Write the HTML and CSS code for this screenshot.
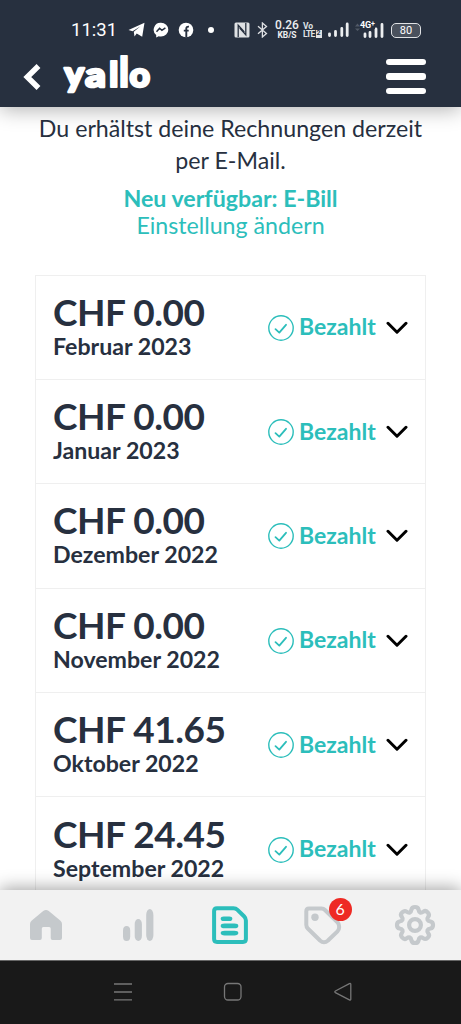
FILE: index.html
```html
<!DOCTYPE html>
<html lang="de">
<head>
<meta charset="utf-8">
<title>yallo – Rechnungen</title>
<link rel="stylesheet" href="styles.css">
</head>
<body>
<div class="phone">
  <header class="top">
    <div class="status">
      <span class="clock">11:31</span>
      <svg class="st-tg" width="17" height="16" viewBox="0 0 17 16"><path d="M0.5 8 16.5 0.8 14.2 14.8 8.7 11.6 6.5 14.5 5.8 9.8 12.5 4.2 4.6 9.2Z" fill="#fff"/></svg>
      <svg class="st-ms" width="16" height="16" viewBox="0 0 16 16"><path d="M8 .8a7.2 6.8 0 0 1 0 13.8q-1.200 0-2.300-.4L3.200 15.400V13A6.900 6.900 0 0 1 8 .8Z" fill="#fff"/><path d="M3.500 9.700 6.600 6.300 8.900 8.400 12.400 5.900" fill="none" stroke="#27303f" stroke-width="1.500"/></svg>
      <svg class="st-fb" width="16" height="16" viewBox="0 0 16 16"><circle cx="8" cy="8" r="7.300" fill="#fff"/><path d="M8.300 15.500V6.600Q8.300 4.400 10.900 4.700M5.800 8.600H10.700" fill="none" stroke="#27303f" stroke-width="1.900"/></svg>
      <i class="dot"></i>
      <svg class="st-nfc" width="16" height="16" viewBox="0 0 16 16"><rect x=".5" y=".5" width="15" height="15" rx="1.500" fill="#dfe1e4"/><path d="M4.200 15V3.200L10.300 10M11.800 1V12.800L5.700 6" fill="none" stroke="#27303f" stroke-width="1.300"/></svg>
      <svg class="st-bt" width="11" height="16" viewBox="0 0 11 16"><path d="M1 4.200 9.500 11.500 5.400 15V1L9.500 4.500 1 11.800" fill="none" stroke="#dfe1e4" stroke-width="1.300"/></svg>
      <span class="net"><b>0.26</b><small>KB/S</small></span>
      <span class="volte"><span>Vo</span><span class="lte">LTE<em>2</em></span></span>
      <svg class="st-s1" width="22" height="16" viewBox="0 0 22 16"><path d="M2.500 13.500V11.800M8.500 13.500V9.500M14.800 13.500V6.500M20.200 13.500V2" stroke="#eceef0" stroke-width="2.800" stroke-linecap="round"/></svg>
      <span class="sig4">
        <svg width="29" height="17" viewBox="0 0 29 17"><path d="M0 4.500 2.500 1.500 5 4.500ZM0 6.500H5L2.500 9Z" fill="#515966"/><path d="M10 14.500V12M15 14.500V10.500M21 14.500V7M27 14.500V2.500" stroke="#eceef0" stroke-width="2.800" stroke-linecap="round"/></svg>
        <span class="g4">4G<sup>+</sup></span>
      </span>
      <span class="batt">80</span>
    </div>
    <div class="brandbar">
      <svg class="back" width="18" height="28" viewBox="0 0 18 28"><path d="M15.500 3 4.300 14 15.500 25" fill="none" stroke="#fff" stroke-width="5.500"/></svg>
      <svg class="logo" width="90" height="46" viewBox="62 50 90 46" aria-label="yallo">
        <g class="wordmark">
          <text x="64.500" y="85.500" textLength="19.500" lengthAdjust="spacingAndGlyphs">y</text>
          <text x="85.300" y="86.500" textLength="20.500" lengthAdjust="spacingAndGlyphs">a</text>
          <text class="ell" transform="translate(108.700 86.800) scale(1 .980)" textLength="10" lengthAdjust="spacingAndGlyphs">l</text>
          <text class="ell" transform="translate(119 86.800) scale(1 1.210)" textLength="10" lengthAdjust="spacingAndGlyphs">l</text>
          <text x="129.500" y="86.500" textLength="20.500" lengthAdjust="spacingAndGlyphs">o</text>
        </g>
      </svg>
      <span class="burger"><i></i><i></i><i></i></span>
    </div>
  </header>

  <main class="content">
    <p class="intro">Du erhältst deine Rechnungen derzeit<br>per E-Mail.</p>
    <div class="ebill"><strong>Neu verfügbar: E-Bill</strong><a>Einstellung ändern</a></div>
    <ul class="bills">
      <li class="bill"><div class="info"><b>CHF 0.00</b><span>Februar 2023</span></div><svg class="ok" viewBox="0 0 26 26"><use href="#check"/></svg><span class="paid">Bezahlt</span><svg class="chev" viewBox="0 0 22 14"><use href="#down"/></svg></li>
      <li class="bill"><div class="info"><b>CHF 0.00</b><span>Januar 2023</span></div><svg class="ok" viewBox="0 0 26 26"><use href="#check"/></svg><span class="paid">Bezahlt</span><svg class="chev" viewBox="0 0 22 14"><use href="#down"/></svg></li>
      <li class="bill"><div class="info"><b>CHF 0.00</b><span>Dezember 2022</span></div><svg class="ok" viewBox="0 0 26 26"><use href="#check"/></svg><span class="paid">Bezahlt</span><svg class="chev" viewBox="0 0 22 14"><use href="#down"/></svg></li>
      <li class="bill"><div class="info"><b>CHF 0.00</b><span>November 2022</span></div><svg class="ok" viewBox="0 0 26 26"><use href="#check"/></svg><span class="paid">Bezahlt</span><svg class="chev" viewBox="0 0 22 14"><use href="#down"/></svg></li>
      <li class="bill"><div class="info"><b>CHF 41.65</b><span>Oktober 2022</span></div><svg class="ok" viewBox="0 0 26 26"><use href="#check"/></svg><span class="paid">Bezahlt</span><svg class="chev" viewBox="0 0 22 14"><use href="#down"/></svg></li>
      <li class="bill"><div class="info"><b>CHF 24.45</b><span>September 2022</span></div><svg class="ok" viewBox="0 0 26 26"><use href="#check"/></svg><span class="paid">Bezahlt</span><svg class="chev" viewBox="0 0 22 14"><use href="#down"/></svg></li>
    </ul>
  </main>

  <nav class="tabs">
    <span class="tab"><svg width="34" height="34" viewBox="0 0 34 34"><path d="M1 16Q1 14 2.500 12.800L14.200 3Q17 .8 19.800 3L31.500 12.800Q33 14 33 16V30Q33 32 31 32H23.500Q21.700 32 21.700 30V20.500Q21.700 19 20.200 19H14.300Q12.800 19 12.800 20.500V30Q12.800 32 11 32H3Q1 32 1 30Z" fill="#c5c9cc"/></svg></span>
    <span class="tab"><svg width="34" height="34" viewBox="0 0 34 34" fill="#c5c9cc"><rect x="2" y="18" width="7.200" height="15" rx="3.600" ry="4.500"/><rect x="13.700" y="11" width="7.200" height="22" rx="3.600" ry="5"/><rect x="25.200" y="1" width="7.200" height="32" rx="3.600" ry="6"/></svg></span>
    <span class="tab"><svg width="38" height="40" viewBox="0 0 38 40" fill="none" stroke="#2cbebb"><path d="M6 3.200H22.500Q24.800 3.200 26.500 4.900L33 11.200Q34.900 13 34.900 15.600V34Q34.900 36.900 32 36.900H6Q3.100 36.900 3.100 34V6.100Q3.100 3.200 6 3.200Z" stroke-width="4"/><g fill="#2cbebb" stroke="none"><rect x="9.700" y="11.400" width="11.600" height="4.600" rx="3" ry="2.300"/><rect x="9.700" y="18.600" width="17.600" height="4.600" rx="4" ry="2.300"/><rect x="9.700" y="25.800" width="17.600" height="4.600" rx="4" ry="2.300"/></g></svg></span>
    <span class="tab"><span class="tagwrap"><svg width="38" height="40" viewBox="0 0 38 40"><path d="M5 3.500H17.500Q19.500 3.500 21 5L33.500 17.200Q35.100 18.800 35.100 21.200V22.500Q35.100 24.700 33.500 26.300L24 35.500Q20 39 16 35.500L3.800 23.500Q2.300 22 2.300 19.800V6.200Q2.300 3.500 5 3.500Z" fill="none" stroke="#c5c9cc" stroke-width="4"/><circle cx="11" cy="12.300" r="3.700" fill="#c5c9cc"/></svg><b class="badge">6</b></span></span>
    <span class="tab"><svg width="42" height="42" viewBox="-21 -21 42 42" fill="none" stroke="#c5c9cc" stroke-width="4.200" stroke-linejoin="round"><path d="M-3.500-15.500Q-3-18 0-18T3.500-15.500Q4.500-10.500 8.500-13.400Q10.600-15 12.700-12.700T13.400-8.500Q10.500-4.500 15.500-3.500Q18-3 18 0T15.500 3.500Q10.500 4.500 13.400 8.500Q15 10.600 12.700 12.700T8.500 13.400Q4.500 10.500 3.500 15.500Q3 18 0 18T-3.500 15.500Q-4.500 10.500-8.500 13.400Q-10.600 15-12.700 12.700T-13.400 8.500Q-10.500 4.500-15.500 3.500Q-18 3-18 0T-15.500-3.500Q-10.500-4.500-13.400-8.500Q-15-10.600-12.700-12.700T-8.500-13.400Q-4.500-10.500-3.500-15.500Z"/><circle r="5.900"/></svg></span>
  </nav>

  <footer class="sysnav">
    <svg width="20" height="20" viewBox="0 0 20 20"><path d="M1 2H19M1 10H19M1 17.800H19"/></svg>
    <svg width="20" height="20" viewBox="0 0 20 20"><rect x="1.500" y="1.500" width="16.500" height="16.500" rx="3.500"/></svg>
    <svg width="20" height="20" viewBox="0 0 20 20"><path d="M17.800 2.500V17Q17.800 18.500 16.400 17.800L2.400 10.600Q1.200 9.800 2.400 9L16.400 1.700Q17.800 1 17.800 2.500Z"/></svg>
  </footer>
</div>
<svg width="0" height="0" class="defs"><defs>
  <g id="check" fill="none" stroke="#2cbebb"><circle cx="13" cy="13" r="12.200" stroke-width="1.400"/><path d="M7.500 14.200 11.300 17.600 18 9.800" stroke-width="1.800" stroke-linecap="round" stroke-linejoin="round"/></g>
  <path id="down" d="M2 2.300 11 11.200 20 2.300" fill="none" stroke="#000" stroke-width="3" stroke-linecap="round" stroke-linejoin="round"/>
</defs></svg>
</body>
</html>
```
FILE: styles.css
```css
* { box-sizing: border-box; }
body { margin: 0; background: #fff; color: #27303f; font-family: Lato, sans-serif; }
svg { display: block; flex: none; }
.defs { position: absolute; }
.phone { width: 461px; height: 1024px; display: flex; flex-direction: column; overflow: hidden; }

.top { position: relative; z-index: 1; flex: none; height: 107px; background: #27303f; box-shadow: 0 2px 20px rgba(0,0,0,.33); }
.status { display: flex; align-items: center; height: 46px; padding: 14px 0 0 71px; color: #fff; font-family: Roboto, sans-serif; }
.clock { width: 56px; font-size: 18.500px; font-weight: 400; line-height: 20px; }
.st-tg { margin-left: 1px; }
.st-ms { margin-left: 8px; }
.st-fb { margin-left: 9px; }
.dot { width: 6px; height: 6px; margin-left: 14px; border-radius: 50%; background: #fff; }
.st-nfc { margin-left: 20px; }
.st-bt { margin-left: 7px; }
.net { display: flex; flex-direction: column; align-items: center; width: 26px; margin-left: 6px; color: #eceef0; }
.net b { font-size: 12px; font-weight: 500; line-height: 11px; }
.net small { font-size: 8.500px; font-weight: 700; line-height: 9px; }
.volte { display: flex; flex-direction: column; width: 20px; margin-left: 3px; color: #dfe1e4; font-size: 8.500px; font-weight: 700; line-height: 8px; }
.lte { display: flex; letter-spacing: -.7px; }
.lte em { padding: 0 1px; margin-left: 1px; background: #dfe1e4; color: #27303f; font-size: 7px; font-style: normal; line-height: 7px; letter-spacing: 0; }
.st-s1 { margin-left: 4px; }
.sig4 { position: relative; margin-left: 6px; }
.g4 { position: absolute; left: 5px; top: 0; background: #27303f; font-size: 9px; font-weight: 700; line-height: 7px; letter-spacing: -.2px; }
.g4 sup { font-size: 7px; line-height: 0; vertical-align: 2px; }
.batt { display: flex; align-items: center; justify-content: center; width: 30px; height: 15px; margin-left: 7px; border: 1px solid #dfe1e4; border-radius: 5px; background: #4a515d; font-size: 11px; }

.brandbar { display: flex; height: 61px; padding: 0 35px 0 23px; }
.back { margin-top: 17px; }
.logo { margin: 4px 0 0 21px; overflow: visible; }
.wordmark { fill: #fff; stroke: #fff; stroke-width: 2.600px; stroke-linejoin: round; font: 900 35px Lato, sans-serif; }
.ell { stroke-width: 1.800px; }
.burger { display: flex; flex-direction: column; gap: 8px; width: 40px; margin: 13px 0 0 auto; }
.burger i { height: 6.300px; border-radius: 3px; background: #fff; }

.content { flex: none; height: 782.500px; overflow: hidden; padding: 5px 35px 0; }
.intro { margin: 0 -10px; text-align: center; font-size: 23.200px; line-height: 32px; }
.ebill { display: flex; flex-direction: column; align-items: center; margin-top: 9px; color: #2cbebb; font-size: 23.200px; line-height: 27px; }
.bills { list-style: none; margin: 35.500px 0 0; padding: 0; border: 1px solid #efefef; }
.bill { display: flex; align-items: center; height: 104.400px; padding: 1px 17px 0; border-bottom: 1px solid #efefef; }
.info { display: flex; flex-direction: column; width: 215px; flex: none; margin-top: -2px; }
.info b { font-size: 37px; line-height: 38px; font-weight: 700; letter-spacing: -.45px; }
.info span { font-size: 23.150px; line-height: 30px; font-weight: 700; }
.ok { width: 26px; height: 26px; }
.paid { width: 77px; margin: -3px 0 0 5px; color: #2cbebb; font-size: 23px; font-weight: 700; line-height: 26px; }
.chev { width: 22px; height: 14px; margin-left: 10px; }

.tabs { position: relative; z-index: 1; flex: none; display: grid; grid-template-columns: repeat(5, 1fr); height: 70.500px; align-items: center; background: #f2f2f2; box-shadow: 0 -2px 16px rgba(0,0,0,.36); }
.tab { display: flex; justify-content: center; }
.tagwrap { position: relative; }
.badge { position: absolute; left: 25px; top: -7px; width: 23px; height: 23px; border-radius: 50%; background: #ee2a24; color: #fff; font-size: 16px; font-weight: 400; line-height: 22px; text-align: center; }
.sysnav { position: relative; z-index: 2; flex: 1; display: flex; justify-content: center; gap: 90px; padding: 21px 0 0 4px; background: #191919; border-top: 1px solid #666; }
.sysnav svg { fill: none; stroke: #777; stroke-width: 1.300; }
```
